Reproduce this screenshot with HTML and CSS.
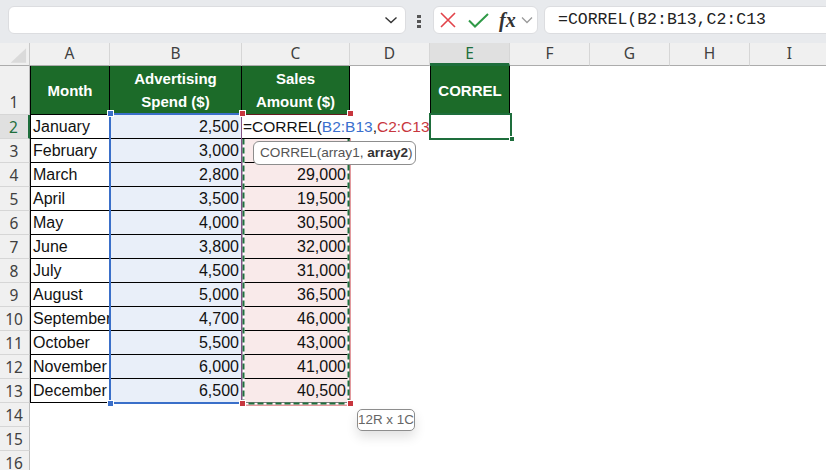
FILE: index.html
```html
<!DOCTYPE html>
<html>
<head>
<meta charset="utf-8">
<link rel="stylesheet" href="styles.css">
</head>
<body>
<div class="app">
  <div class="topbar">
    <div class="namebox">
      <svg class="nb-chev" width="14" height="8" viewBox="0 0 14 8"><path d="M1.5 1.5 L7 6.5 L12.5 1.5" fill="none" stroke="#333" stroke-width="1.4"/></svg>
    </div>
    <div class="dots"><i></i><i></i><i></i></div>
    <div class="fbtns">
      <svg class="ic-x" width="16" height="16" viewBox="0 0 16 16"><path d="M1 1 L15 15 M15 1 L1 15" stroke="#e2434a" stroke-width="1.6" fill="none"/></svg>
      <svg class="ic-ok" width="21" height="15" viewBox="0 0 21 15"><path d="M1 7.5 L7 13.5 L20 1" stroke="#2f9a47" stroke-width="2" fill="none"/></svg>
      <span class="fx">fx</span>
      <svg class="ic-chev" width="12" height="8" viewBox="0 0 12 8"><path d="M1 1.5 L6 6.5 L11 1.5" fill="none" stroke="#9a9a9a" stroke-width="1.3"/></svg>
    </div>
    <div class="formula">=CORREL(B2:B13,C2:C13</div>
  </div>

  <div class="sheet">
    <div class="grid">
      <div class="ch corner"><svg width="30" height="23" viewBox="0 0 30 23"><path d="M27 5 L27 20 L11 20 Z" fill="#dadada"/></svg></div>
      <div class="ch">A</div><div class="ch">B</div><div class="ch">C</div><div class="ch">D</div>
      <div class="ch sel">E</div><div class="ch">F</div><div class="ch">G</div><div class="ch">H</div><div class="ch">I</div>

      <div class="rh rh1">1</div>
      <div class="c hd ca">Month</div>
      <div class="c hd">Advertising<br>Spend ($)</div>
      <div class="c hd">Sales<br>Amount ($)</div>
      <div class="c hd he">CORREL</div>

      <div class="rh rsel">2</div>
      <div class="c ca">January</div>
      <div class="c cb">2,500</div>
      <div class="c cc edit"><span class="editor">=CORREL(<span class="rb">B2:B13</span>,<span class="rc">C2:C13</span></span></div>

      <div class="rh">3</div><div class="c ca">February</div><div class="c cb">3,000</div><div class="c cc">25,000</div>
      <div class="rh">4</div><div class="c ca">March</div><div class="c cb">2,800</div><div class="c cc">29,000</div>
      <div class="rh">5</div><div class="c ca">April</div><div class="c cb">3,500</div><div class="c cc">19,500</div>
      <div class="rh">6</div><div class="c ca">May</div><div class="c cb">4,000</div><div class="c cc">30,500</div>
      <div class="rh">7</div><div class="c ca">June</div><div class="c cb">3,800</div><div class="c cc">32,000</div>
      <div class="rh">8</div><div class="c ca">July</div><div class="c cb">4,500</div><div class="c cc">31,000</div>
      <div class="rh">9</div><div class="c ca">August</div><div class="c cb">5,000</div><div class="c cc">36,500</div>
      <div class="rh">10</div><div class="c ca">September</div><div class="c cb">4,700</div><div class="c cc">46,000</div>
      <div class="rh">11</div><div class="c ca">October</div><div class="c cb">5,500</div><div class="c cc">43,000</div>
      <div class="rh">12</div><div class="c ca">November</div><div class="c cb">6,000</div><div class="c cc">41,000</div>
      <div class="rh">13</div><div class="c ca">December</div><div class="c cb">6,500</div><div class="c cc">40,500</div>
      <div class="rh">14</div>
      <div class="rh">15</div>
      <div class="rh">16</div>
    </div>

    <div class="selB"></div>
    <svg class="selC" width="112" height="294" viewBox="0 0 112 294">
      <rect x="2" y="2" width="108" height="290" fill="none" stroke="#c7363e" stroke-width="1"/>
      <rect x="3.5" y="3.5" width="105" height="287" fill="none" stroke="#ffffff" stroke-width="2"/>
      <rect x="3.5" y="3.5" width="105" height="287" fill="none" stroke="#1f6f3e" stroke-width="2" stroke-dasharray="6 3"/>
    </svg>
    <div class="selE"></div>
    <i class="hdl blue h1"></i>
    <i class="hdl blue h2"></i>
    <i class="hdl red h3"></i>
    <i class="hdl red h4"></i>
    <i class="hdl red h5"></i>
    <i class="hdl red h6"></i>
    <i class="hdl green h7"></i>

    <div class="tip">CORREL(array1, <b>array2</b>)</div>
    <div class="size">12R x 1C</div>
  </div>
</div>
</body>
</html>
```

FILE: styles.css
```css
* { box-sizing: border-box; }
html, body { margin: 0; padding: 0; }
body {
  width: 826px;
  height: 470px;
  overflow: hidden;
  background: #ffffff;
  font-family: "Liberation Sans", Arial, sans-serif;
}
.app { width: 826px; height: 470px; overflow: hidden; }

/* top bar */
.topbar {
  height: 43px;
  background: #e8eaed;
  display: flex;
  align-items: flex-start;
  padding: 6px 0 0 8px;
}
.namebox {
  width: 398px;
  height: 28px;
  background: #fff;
  border: 1px solid #dcdde0;
  border-radius: 6px;
  display: flex;
  align-items: center;
  justify-content: flex-end;
  padding-right: 7px;
}
.dots {
  width: 4px;
  margin-left: 11px;
  margin-top: 9px;
  display: flex;
  flex-direction: column;
  gap: 2px;
}
.dots i { display: block; width: 4px; height: 3px; background: #555; }
.fbtns {
  width: 105px;
  height: 28px;
  margin-left: 12px;
  background: #fff;
  border: 1px solid #dcdde0;
  border-radius: 6px;
  display: flex;
  align-items: center;
  padding-left: 6px;
}
.ic-ok { margin-left: 12px; }
.fx {
  margin-left: 10px;
  font-family: "Liberation Serif", "Times New Roman", serif;
  font-style: italic;
  font-weight: bold;
  font-size: 20px;
  color: #333;
  line-height: 20px;
}
.ic-chev { margin-left: 5px; }
.formula {
  flex: 1;
  height: 28px;
  margin-left: 6px;
  margin-right: -12px;
  background: #fff;
  border: 1px solid #dcdde0;
  border-radius: 6px;
  font-family: "Liberation Mono", "DejaVu Sans Mono", monospace;
  font-size: 16.5px;
  line-height: 26px;
  color: #222;
  padding-left: 13px;
}

/* sheet */
.sheet { position: relative; height: 427px; }
.grid {
  display: grid;
  grid-template-columns: 30px 80px 132px 108px 80px 80px 80px 80px 80px 80px;
  grid-template-rows: 23px 49px repeat(15, 24px);
}
.ch {
  background: #f0f0f0;
  border-right: 1px solid #d6d6d6;
  border-bottom: 1px solid #acacac;
  font-family: "Noto Sans", "Open Sans", sans-serif;
  font-size: 15.5px;
  color: #404040;
  display: flex;
  align-items: center;
  justify-content: center;
  line-height: 1;
}
.ch.corner { border-right: 1px solid #c8c8c8; }
.ch.sel {
  background: #e0e0e0;
  color: #1e6e3c;
  border-bottom: 3px solid #1e6e3c;
  padding-top: 2px;
}
.rh {
  grid-column: 1;
  background: #f0f0f0;
  border-right: 1px solid #bdbdbd;
  border-bottom: 1px solid #d6d6d6;
  font-family: "Noto Sans", "Open Sans", sans-serif;
  font-size: 15.5px;
  color: #404040;
  display: flex;
  align-items: center;
  justify-content: center;
  padding-right: 1px;
}
.rh1 { align-items: flex-end; padding-bottom: 1px; }
.rh.rsel {
  background: #e0e0e0;
  color: #1e6e3c;
  border-right: 2px solid #1e6e3c;
}

.c {
  border-right: 1px solid #000;
  border-bottom: 1px solid #000;
  font-size: 16px;
  color: #111;
  line-height: 24px;
  white-space: nowrap;
  overflow: hidden;
}
.ca { border-left: 1px solid #000; padding-left: 2px; }
.cb { background: #e9eff9; text-align: right; padding-right: 2px; }
.cc { background: #f9eaea; text-align: right; padding-right: 3px; }
.hd {
  background: #1c6b29;
  color: #fff;
  font-weight: bold;
  font-size: 15px;
  line-height: 23px;
  text-align: center;
  display: flex;
  align-items: center;
  justify-content: center;
  padding: 0;
}
.he { grid-column: 6; border-left: 1px solid #000; }
.c.edit { background: #fff; overflow: visible; position: relative; z-index: 3; }
.editor {
  position: absolute;
  left: 0;
  top: 0;
  height: 23px;
  width: 187px;
  background: #fff;
  text-align: left;
  padding-left: 1px;
  font-size: 15.5px;
  color: #111;
}
.rb { color: #3a6fce; }
.rc { color: #c8373e; }

/* overlays */
.selB {
  position: absolute;
  left: 109px;
  top: 70px;
  width: 134px;
  height: 291px;
  border: 2px solid #3a6fc9;
}
.selC {
  position: absolute;
  left: 240px;
  top: 70px;
}
.selE {
  position: absolute;
  left: 429px;
  top: 70px;
  width: 83px;
  height: 27px;
  border: 2px solid #1e6e3c;
}
.hdl {
  position: absolute;
  width: 7px;
  height: 7px;
  border: 1px solid #fff;
  z-index: 4;
}
.hdl.blue { background: #3a6fc9; }
.hdl.red { background: #c7363e; }
.hdl.green { background: #1e6e3c; width: 6px; height: 6px; }
.h1 { left: 107px; top: 67px; }
.h2 { left: 107px; top: 357px; }
.h3 { left: 239px; top: 67px; }
.h4 { left: 347px; top: 67px; }
.h5 { left: 239px; top: 357px; }
.h6 { left: 347px; top: 357px; }
.h7 { left: 509px; top: 93px; }

.tip {
  position: absolute;
  left: 253px;
  top: 98px;
  width: 163px;
  height: 24px;
  background: #fff;
  border: 1px solid #8d8d8d;
  border-radius: 6px;
  font-size: 13.6px;
  line-height: 22px;
  color: #555;
  padding-left: 6px;
  white-space: nowrap;
  z-index: 5;
}
.tip b { color: #333; }
.size {
  position: absolute;
  left: 357px;
  top: 366px;
  width: 58px;
  height: 22px;
  background: #fff;
  border: 1px solid #8d8d8d;
  border-radius: 5px;
  font-size: 13.4px;
  line-height: 20px;
  color: #666;
  text-align: center;
  white-space: nowrap;
  box-shadow: 0 6px 12px rgba(0,0,0,0.12);
  z-index: 5;
}
```
